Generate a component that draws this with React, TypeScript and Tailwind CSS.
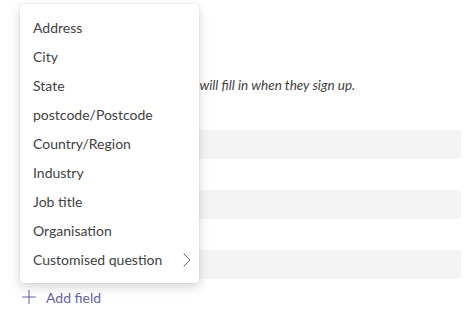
import { Plus, ChevronRight } from "lucide-react";

const fields = [
  "Address",
  "City",
  "State",
  "postcode/Postcode",
  "Country/Region",
  "Industry",
  "Job title",
  "Organisation",
];

function FieldMenu() {
  return (
    <div className="absolute left-5 top-1 w-[179px] py-[9px] bg-white rounded-[4px] shadow-[0_4px_12px_rgba(0,0,0,0.16),0_0_2px_rgba(0,0,0,0.12)]">
      {fields.map(f => (
        <div key={f} className="h-[29px] flex items-center pl-[13px] text-[14px] text-[#424242]">
          {f}
        </div>
      ))}
      <div className="h-[29px] flex items-center justify-between pl-[13px] text-[14px] text-[#424242]">
        <span>Customised question</span>
        <ChevronRight size={24} strokeWidth={1} className="text-[#616161]" />
      </div>
    </div>
  );
}

export default function App() {
  return (
    <main className="relative w-[476px] h-[324px] bg-white overflow-hidden font-['Lato',sans-serif]">
      <div className="pl-5 pr-[15px] pt-[28px]">
        <h2 className="text-[14px] font-semibold text-[#242424] h-[24px]">Registration form</h2>
        <p className="mt-[24px] text-[13.5px] italic text-[#424242] leading-[18px]">
          Select the fields that registrants will fill in when they sign up.
        </p>
        <div className="mt-[36px] flex flex-col gap-[31px]">
          <div className="h-[29px] rounded-[4px] bg-[#f4f4f4]" />
          <div className="h-[29px] rounded-[4px] bg-[#f4f4f4]" />
          <div className="h-[29px] rounded-[4px] bg-[#f4f4f4]" />
        </div>
        <button className="mt-[7px] h-[22px] -ml-[2px] flex items-center gap-[6px] text-[14px] text-[#6264a7]">
          <Plus size={22} strokeWidth={1.1} />
          Add field
        </button>
      </div>
      <FieldMenu />
    </main>
  );
}
